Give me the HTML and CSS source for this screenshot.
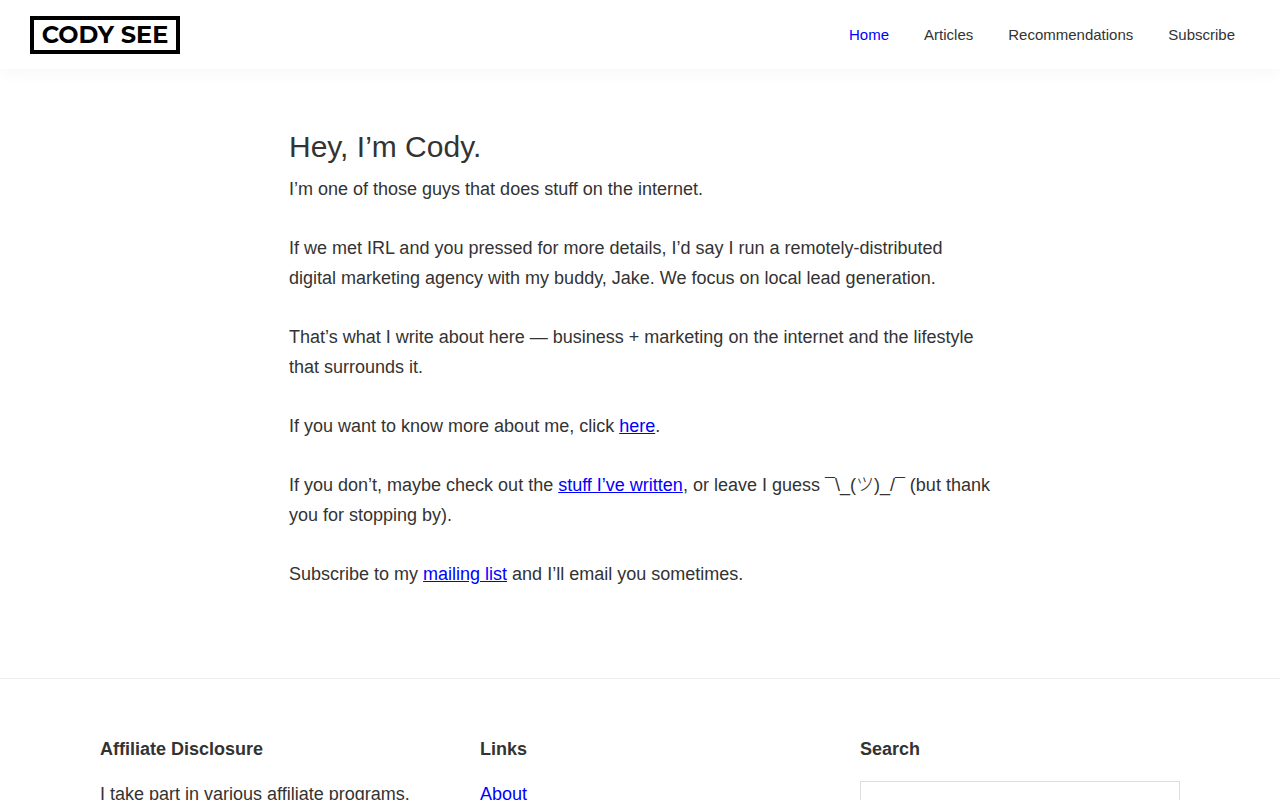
FILE: index.html
```
<!DOCTYPE html>
<html lang="en">
<head>
    <meta charset="UTF-8">
    <meta name="viewport" content="width=device-width, initial-scale=1.0">
    <title>Cody See</title>
    <link rel="stylesheet" href="styles.css">
</head>
<body>
    <header class="site-header">
        <a class="logo" href="#">CODY SEE</a>
        <nav class="nav-primary">
            <a class="current" href="#">Home</a>
            <a href="#">Articles</a>
            <a href="#">Recommendations</a>
            <a href="#">Subscribe</a>
        </nav>
    </header>
    <main class="content">
        <h1>Hey, I’m Cody.</h1>
        <p>I’m one of those guys that does stuff on the internet.</p>
        <p>If we met IRL and you pressed for more details, I’d say I run a remotely-distributed digital marketing agency with my buddy, Jake. We focus on local lead generation.</p>
        <p>That’s what I write about here — business + marketing on the internet and the lifestyle that surrounds it.</p>
        <p>If you want to know more about me, click <a href="#">here</a>.</p>
        <p>If you don’t, maybe check out the <a href="#">stuff I’ve written</a>, or leave I guess <span class="shrug">¯\_(ツ)_/¯</span> (but thank you for stopping by).</p>
        <p>Subscribe to my <a href="#">mailing list</a> and I’ll email you sometimes.</p>
    </main>
    <footer class="footer-widgets">
        <div class="wrap">
            <section class="widget">
                <h3>Affiliate Disclosure</h3>
                <p>I take part in various affiliate programs.</p>
            </section>
            <section class="widget">
                <h3>Links</h3>
                <a href="#">About</a>
            </section>
            <section class="widget">
                <h3><label for="search">Search</label></h3>
                <input type="search" id="search">
            </section>
        </div>
    </footer>
</body>
</html>
```
FILE: styles.css
```
* {
    box-sizing: border-box;
}

body {
    margin: 0;
    background-color: #fff;
    color: #333;
    font-family: "Liberation Sans", Arial, "Noto Sans CJK JP", sans-serif;
    font-size: 18px;
    line-height: 30px;
}

a {
    color: #00f;
}

h1,
h3,
p {
    margin: 0;
}

.site-header {
    display: flex;
    align-items: center;
    justify-content: space-between;
    padding: 16px 30px 15px;
    box-shadow: 0 0 20px rgba(0, 0, 0, 0.05);
}

.logo {
    width: 150px;
    height: 38px;
    border: 4px solid #000;
    color: #000;
    font-family: Montserrat, "Open Sans", sans-serif;
    font-size: 24px;
    font-weight: 700;
    line-height: 30px;
    text-align: center;
    text-decoration: none;
}

.nav-primary {
    display: flex;
    gap: 35px;
    padding-right: 15px;
    font-size: 15px;
}

.nav-primary a {
    color: #333;
    text-decoration: none;
}

.nav-primary .current {
    color: #00f;
}

.content {
    max-width: 702px;
    margin: 0 auto;
    padding: 60px 0;
}

.content h1 {
    margin-bottom: 9px;
    font-size: 30px;
    font-weight: 400;
    line-height: 36px;
}

.content p {
    margin-bottom: 29px;
}

.shrug {
    font-weight: 300;
}

.footer-widgets {
    border-top: 1px solid #eee;
    padding: 60px 30px;
    line-height: 26px;
}

.wrap {
    display: grid;
    grid-template-columns: repeat(3, 1fr);
    gap: 60px;
    max-width: 1080px;
    margin: 0 auto;
}

.widget h3 {
    margin-bottom: 22px;
    font-size: 18px;
    line-height: 20px;
}

.widget input {
    width: 100%;
    height: 60px;
    border: 1px solid #ddd;
    background-color: #fff;
}
```
